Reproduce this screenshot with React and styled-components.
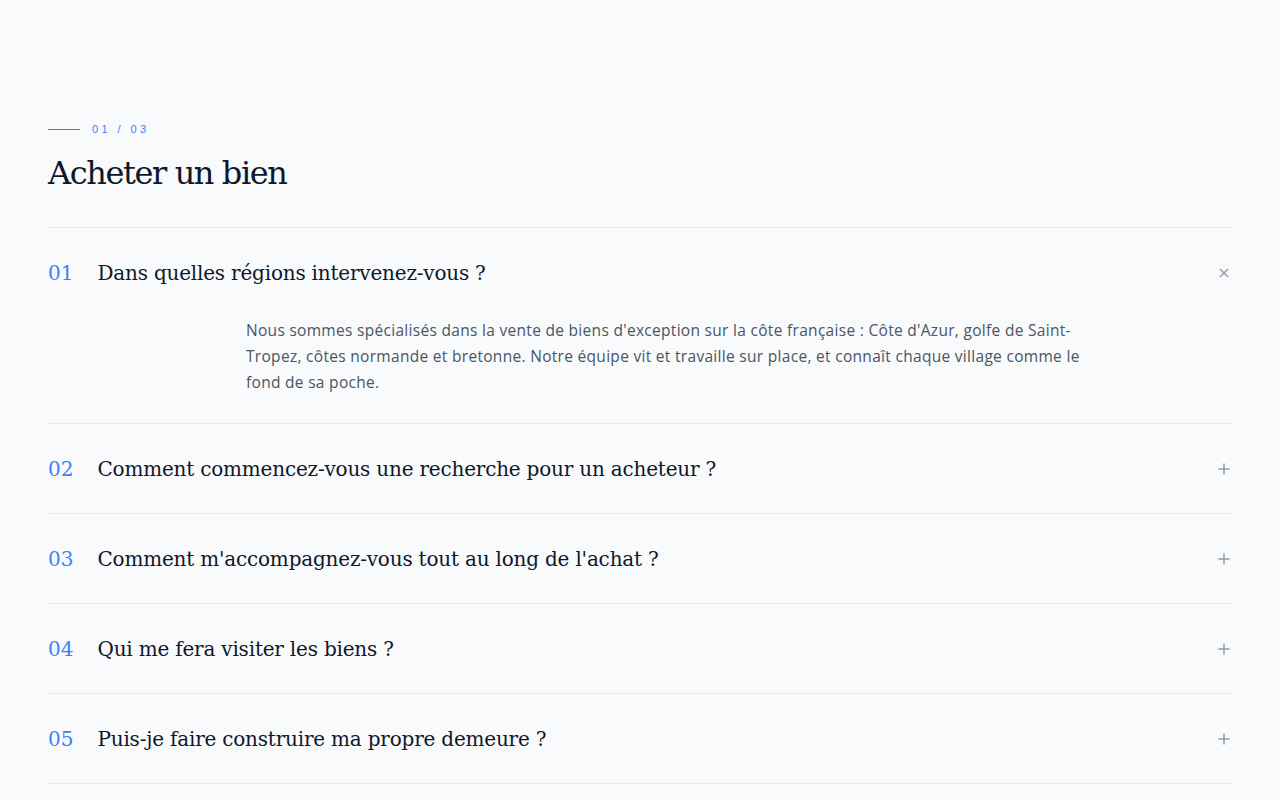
import React, { useState } from 'react';
import styled, { createGlobalStyle } from 'styled-components';

const GlobalStyle = createGlobalStyle`
  html, body {
    margin: 0;
    padding: 0;
    background: #f8fafc;
  }
  body {
    font-family: 'Open Sans', 'Liberation Sans', sans-serif;
    color: #111827;
  }
`;

const Section = styled.section`
  padding: 121px 48px 0;
`;

const Eyebrow = styled.div`
  display: flex;
  align-items: center;
  gap: 12px;
  color: #3b82f6;
  font-family: 'Liberation Sans', Arial, sans-serif;
  font-size: 11px;
  letter-spacing: 3.4px;
  height: 16px;
`;

const EyebrowLine = styled.span`
  width: 32px;
  height: 1px;
  background: #3b82f6;
`;

const Title = styled.h2`
  margin: 14px 0 0;
  padding-bottom: 32px;
  font-family: 'DejaVu Serif', Georgia, serif;
  font-weight: 400;
  font-size: 32px;
  line-height: 44px;
  letter-spacing: -1.4px;
  color: #0f172a;
  border-bottom: 1px solid #e5e7eb;
`;

const List = styled.div`
  display: flex;
  flex-direction: column;
`;

const Item = styled.div`
  border-bottom: 1px solid #e5e7eb;
`;

const Question = styled.button`
  display: flex;
  align-items: center;
  width: 100%;
  height: 89px;
  padding: 0;
  border: 0;
  background: none;
  cursor: pointer;
  text-align: left;
`;

const Num = styled.span`
  color: #3b82f6;
  font-family: 'DejaVu Serif', Georgia, serif;
  font-size: 20px;
  margin-right: 24px;
`;

const QText = styled.span`
  flex: 1;
  font-family: 'DejaVu Serif', Georgia, serif;
  font-size: 20px;
  letter-spacing: -0.2px;
  color: #0f172a;
`;

const Icon = styled.span`
  width: 16px;
  height: 16px;
  display: flex;
  align-items: center;
  justify-content: center;
  color: #9ca3af;
`;

const Answer = styled.div`
  padding: 0 0 28px 198px;
  max-width: 850px;
  font-size: 15.5px;
  letter-spacing: 0.3px;
  line-height: 26px;
  color: #4b5563;
`;

const faqs = [
  {
    q: 'Dans quelles régions intervenez-vous ?',
    a: "Nous sommes spécialisés dans la vente de biens d'exception sur la côte française : Côte d'Azur, golfe de Saint-Tropez, côtes normande et bretonne. Notre équipe vit et travaille sur place, et connaît chaque village comme le fond de sa poche.",
  },
  { q: 'Comment commencez-vous une recherche pour un acheteur ?', a: '' },
  { q: "Comment m'accompagnez-vous tout au long de l'achat ?", a: '' },
  { q: 'Qui me fera visiter les biens ?', a: '' },
  { q: 'Puis-je faire construire ma propre demeure ?', a: '' },
];

const ToggleIcon = ({ open }) => (
  <svg width="14" height="14" viewBox="0 0 14 14" fill="none" stroke="currentColor" strokeWidth="1.7">
    {open ? (
      <>
        <path d="M3 3 L11 11" />
        <path d="M11 3 L3 11" />
      </>
    ) : (
      <>
        <path d="M7 1.5 V12.5" />
        <path d="M1.5 7 H12.5" />
      </>
    )}
  </svg>
);

const App = () => {
  const [open, setOpen] = useState(0);
  return (
    <>
      <GlobalStyle />
      <Section>
        <Eyebrow>
          <EyebrowLine />
          01 / 03
        </Eyebrow>
        <Title>Acheter un bien</Title>
        <List>
          {faqs.map((f, i) => (
            <Item key={i}>
              <Question onClick={() => setOpen(open === i ? -1 : i)}>
                <Num>{String(i + 1).padStart(2, '0')}</Num>
                <QText>{f.q}</QText>
                <Icon>
                  <ToggleIcon open={open === i} />
                </Icon>
              </Question>
              {open === i && <Answer>{f.a}</Answer>}
            </Item>
          ))}
        </List>
      </Section>
    </>
  );
};

export default App;
